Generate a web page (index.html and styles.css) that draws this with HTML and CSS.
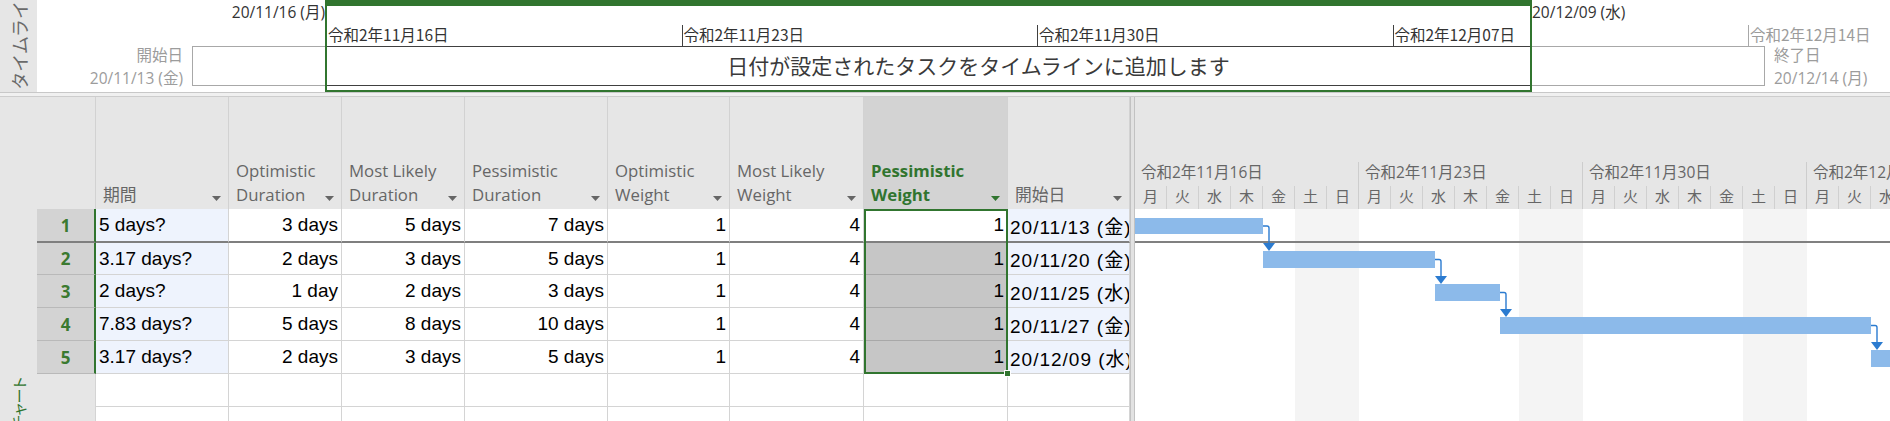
FILE: index.html
```html
<!DOCTYPE html>
<html lang="ja">
<head>
<meta charset="utf-8">
<title>Gantt</title>
<link rel="stylesheet" href="styles.css">
</head>
<body>
<div class="app">
  <div class="tl-pane">
    <div class="side side-top"><span class="side-text">タイムライン</span></div>
    <div class="timeline">
      <div class="tl-date tl-date-start">20/11/16 (月)</div>
      <div class="tl-date tl-date-end">20/12/09 (水)</div>
      <div class="tl-labels tl-labels-start"><span>開始日</span><span>20/11/13 (金)</span></div>
      <div class="tl-bar"><span class="tl-msg">日付が設定されたタスクをタイムラインに追加します</span></div>
      <div class="tl-labels tl-labels-end"><span>終了日</span><span>20/12/14 (月)</span></div>
      <div class="tl-scale">
        <div class="tick">令和2年11月16日</div>
        <div class="tick">令和2年11月23日</div>
        <div class="tick">令和2年11月30日</div>
        <div class="tick">令和2年12月07日</div>
        <div class="tick tick-out">令和2年12月14日</div>
      </div>
      <div class="tl-window"><div class="tl-window-band"></div></div>
    </div>
  </div>
  <div class="divider"></div>
  <div class="gantt-pane">
    <div class="side side-bottom"><span class="side-text side-active">ガントチャート</span></div>
    <div class="sheet">
      <div class="h h-rn"></div>
      <div class="h"><span class="h-text">期間</span><svg class="dd" viewBox="0 0 9 5"><path d="M0 0H9L4.5 5Z"/></svg></div>
      <div class="h"><span class="h-text">Optimistic<br>Duration</span><svg class="dd" viewBox="0 0 9 5"><path d="M0 0H9L4.5 5Z"/></svg></div>
      <div class="h"><span class="h-text">Most Likely<br>Duration</span><svg class="dd" viewBox="0 0 9 5"><path d="M0 0H9L4.5 5Z"/></svg></div>
      <div class="h"><span class="h-text">Pessimistic<br>Duration</span><svg class="dd" viewBox="0 0 9 5"><path d="M0 0H9L4.5 5Z"/></svg></div>
      <div class="h"><span class="h-text">Optimistic<br>Weight</span><svg class="dd" viewBox="0 0 9 5"><path d="M0 0H9L4.5 5Z"/></svg></div>
      <div class="h"><span class="h-text">Most Likely<br>Weight</span><svg class="dd" viewBox="0 0 9 5"><path d="M0 0H9L4.5 5Z"/></svg></div>
      <div class="h h-sel"><span class="h-text">Pessimistic<br>Weight</span><svg class="dd" viewBox="0 0 9 5"><path d="M0 0H9L4.5 5Z"/></svg></div>
      <div class="h"><span class="h-text">開始日</span><svg class="dd" viewBox="0 0 9 5"><path d="M0 0H9L4.5 5Z"/></svg></div>

      <div class="c rn r1">1</div>
      <div class="c blue l r1">5 days?</div>
      <div class="c r1">3 days</div>
      <div class="c r1">5 days</div>
      <div class="c r1">7 days</div>
      <div class="c r1">1</div>
      <div class="c r1">4</div>
      <div class="c r1">1</div>
      <div class="c blue l r1 date">20/11/13 (金)</div>

      <div class="c rn">2</div>
      <div class="c blue l">3.17 days?</div>
      <div class="c">2 days</div>
      <div class="c">3 days</div>
      <div class="c">5 days</div>
      <div class="c">1</div>
      <div class="c">4</div>
      <div class="c sel">1</div>
      <div class="c blue l date">20/11/20 (金)</div>

      <div class="c rn">3</div>
      <div class="c blue l">2 days?</div>
      <div class="c">1 day</div>
      <div class="c">2 days</div>
      <div class="c">3 days</div>
      <div class="c">1</div>
      <div class="c">4</div>
      <div class="c sel">1</div>
      <div class="c blue l date">20/11/25 (水)</div>

      <div class="c rn">4</div>
      <div class="c blue l">7.83 days?</div>
      <div class="c">5 days</div>
      <div class="c">8 days</div>
      <div class="c">10 days</div>
      <div class="c">1</div>
      <div class="c">4</div>
      <div class="c sel">1</div>
      <div class="c blue l date">20/11/27 (金)</div>

      <div class="c rn">5</div>
      <div class="c blue l">3.17 days?</div>
      <div class="c">2 days</div>
      <div class="c">3 days</div>
      <div class="c">5 days</div>
      <div class="c">1</div>
      <div class="c">4</div>
      <div class="c sel">1</div>
      <div class="c blue l date">20/12/09 (水)</div>

      <div class="c rn-empty"></div>
      <div class="c"></div><div class="c"></div><div class="c"></div><div class="c"></div>
      <div class="c"></div><div class="c"></div><div class="c"></div><div class="c"></div>

      <div class="c rn-empty"></div>
      <div class="c"></div><div class="c"></div><div class="c"></div><div class="c"></div>
      <div class="c"></div><div class="c"></div><div class="c"></div><div class="c"></div>

      <div class="selection"><span class="handle"></span></div>
    </div>
    <div class="splitter"></div>
    <div class="chart">
      <div class="chart-head">
        <div class="week">
          <div class="week-label">令和2年11月16日</div>
          <div class="days"><span>月</span><span>火</span><span>水</span><span>木</span><span>金</span><span>土</span><span>日</span></div>
        </div>
        <div class="week">
          <div class="week-label">令和2年11月23日</div>
          <div class="days"><span>月</span><span>火</span><span>水</span><span>木</span><span>金</span><span>土</span><span>日</span></div>
        </div>
        <div class="week">
          <div class="week-label">令和2年11月30日</div>
          <div class="days"><span>月</span><span>火</span><span>水</span><span>木</span><span>金</span><span>土</span><span>日</span></div>
        </div>
        <div class="week">
          <div class="week-label">令和2年12月07日</div>
          <div class="days"><span>月</span><span>火</span><span>水</span><span>木</span><span>金</span><span>土</span><span>日</span></div>
        </div>
      </div>
      <div class="chart-body">
        <div class="bg-week"><span></span><span></span><span></span><span></span><span></span><span class="we"></span><span class="we"></span></div>
        <div class="bg-week"><span></span><span></span><span></span><span></span><span></span><span class="we"></span><span class="we"></span></div>
        <div class="bg-week"><span></span><span></span><span></span><span></span><span></span><span class="we"></span><span class="we"></span></div>
        <div class="bg-week"><span></span><span></span><span></span><span></span><span></span><span class="we"></span><span class="we"></span></div>
        <svg class="bars" width="755" height="212" viewBox="0 0 755 212">
          <rect x="0" y="32" width="755" height="2" fill="#808080"/>
          <rect class="bar" x="0" y="9" width="128" height="16"/>
          <rect class="bar" x="128" y="42" width="172" height="17"/>
          <rect class="bar" x="300" y="75" width="65" height="17"/>
          <rect class="bar" x="365" y="108" width="371" height="17"/>
          <rect class="bar" x="736" y="141" width="30" height="17"/>
          <path class="link" d="M128 17H132Q134 17 134 19V35"/>
          <polygon class="arrow" points="128,34 140,34 134,42"/>
          <path class="link" d="M300 50.5H304Q306 50.5 306 52.5V68"/>
          <polygon class="arrow" points="300,67 312,67 306,75"/>
          <path class="link" d="M365 83.5H369Q371 83.5 371 85.5V101"/>
          <polygon class="arrow" points="365,100 377,100 371,108"/>
          <path class="link" d="M736 116.5H740Q742 116.5 742 118.5V134"/>
          <polygon class="arrow" points="736,133 748,133 742,141"/>
        </svg>
      </div>
    </div>
  </div>
</div>
</body>
</html>
```

FILE: styles.css
```css
* { box-sizing: border-box; }
html, body {
  margin: 0;
  padding: 0;
  width: 1890px;
  height: 421px;
  overflow: hidden;
  background: #ffffff;
}
body {
  font-family: "Open Sans", "Noto Sans CJK JP", sans-serif;
  color: #333;
}
.app {
  display: flex;
  flex-direction: column;
  width: 1890px;
  height: 421px;
}

/* ---------- side labels ---------- */
.side {
  width: 37px;
  flex-shrink: 0;
  background: #e6e6e6;
  display: flex;
  flex-direction: column;
  align-items: center;
  overflow: hidden;
}
.side-text {
  flex-shrink: 0;
  writing-mode: vertical-rl;
  text-orientation: sideways;
  transform: rotate(180deg);
  font-family: "Noto Sans CJK JP", sans-serif;
  font-size: 18px;
  line-height: 20px;
  color: #6a6a6a;
  white-space: nowrap;
}
.side-top {
  justify-content: flex-end;
  padding-bottom: 2px;
}
.side-bottom {
  justify-content: flex-start;
  padding-top: 280px;
}
.side-active {
  color: #31752f;
  font-size: 15px;
  font-feature-settings: "palt";
}

/* ---------- timeline ---------- */
.tl-pane {
  display: flex;
  height: 93px;
  flex-shrink: 0;
  border-bottom: 1px solid #c8c8c8;
}
.timeline {
  flex: 1;
  display: grid;
  grid-template-columns: 155px 133px 1207px 233px 1fr;
  grid-template-rows: 46px 40px 6px;
  overflow: hidden;
  font-size: 15.5px;
}
.tl-date {
  grid-row: 1;
  align-self: start;
  line-height: 24px;
  color: #333;
  white-space: nowrap;
}
.tl-date-start { grid-column: 1 / 3; justify-self: end; }
.tl-date-end { grid-column: 4 / 6; justify-self: start; }
.tl-labels {
  grid-row: 2 / 4;
  display: flex;
  flex-direction: column;
  justify-content: center;
  line-height: 23px;
  color: #9c9c9c;
  white-space: nowrap;
  margin-top: -4px;
}
.tl-labels-start { grid-column: 1; align-items: flex-end; padding-right: 9px; }
.tl-labels-end { grid-column: 5; align-items: flex-start; padding-left: 9px; }
.tl-bar {
  grid-column: 2 / 5;
  grid-row: 2;
  border: 1px solid #a8a8a8;
  display: flex;
  align-items: center;
  justify-content: center;
}
.tl-msg {
  font-family: "Noto Sans CJK JP", sans-serif;
  font-weight: 400;
  font-size: 21px;
  color: #3a3a3a;
  white-space: nowrap;
  margin-top: -3px;
}
.tl-scale {
  grid-column: 3 / 6;
  grid-row: 1;
  align-self: end;
  display: flex;
  padding-left: 1px;
}
.tick {
  flex: 0 0 355.5px;
  height: 21px;
  border-left: 1px solid #404040;
  padding-left: 1px;
  font-family: "Noto Sans CJK JP", sans-serif;
  font-size: 15.5px;
  line-height: 18px;
  color: #333;
  white-space: nowrap;
}
.tick-out { color: #9c9c9c; border-left-color: #a8a8a8; }
.tl-window {
  grid-column: 3;
  grid-row: 1 / 4;
  border: 2px solid #31752f;
  border-top-width: 6px;
}
.tl-window-band {
  margin-top: 40px;
  height: 40px;
  border-top: 1px solid #404040;
  border-bottom: 1px solid #404040;
}

.divider {
  height: 4px;
  flex-shrink: 0;
  background: #f0f0f0;
  border-bottom: 1px solid #cdcdcd;
}

/* ---------- gantt pane ---------- */
.gantt-pane {
  flex: 1;
  display: flex;
  overflow: hidden;
}
.sheet {
  flex: 0 0 1093px;
  position: relative;
  display: grid;
  grid-template-columns: 59px 133px 113px 123px 143px 122px 134px 144px 122px;
  grid-template-rows: 112px 34px 32px 33px 33px 33px 33px 33px;
  align-content: start;
  overflow: hidden;
}
.h {
  background: #e6e6e6;
  border-right: 1px solid #d2d2d2;
  display: flex;
  align-items: flex-end;
  justify-content: space-between;
  padding: 0 7px 2px 7px;
  font-size: 16.8px;
  line-height: 24px;
  color: #666;
  white-space: nowrap;
}
.h-rn { border-right: 1px solid #d2d2d2; }
.h-sel {
  background: #d3d3d3;
  color: #31752f;
  font-weight: 700;
}
.dd {
  width: 9px;
  height: 5px;
  margin-bottom: 6px;
  flex-shrink: 0;
  fill: #666;
}
.h-sel .dd { fill: #31752f; }

.c {
  display: flex;
  align-items: center;
  justify-content: flex-end;
  padding: 0 3px;
  border-right: 1px solid #d4d4d4;
  border-bottom: 1px solid #d4d4d4;
  font-family: "Liberation Sans", "Noto Sans CJK JP", sans-serif;
  font-size: 19px;
  color: #000;
  white-space: nowrap;
  overflow: hidden;
  background: #fff;
}
.c.l { justify-content: flex-start; }
.c.blue { background: #eef3fd; }
.c.date { padding-left: 2px; letter-spacing: 1px; }
.c.rn {
  justify-content: center;
  background: #d3d3d3;
  border-bottom: 1px solid #b9b9b9;
  border-right: 2px solid #31752f;
  font-family: "Open Sans", sans-serif;
  font-weight: 700;
  font-size: 17px;
  letter-spacing: 0;
  color: #3b7a30;
}
.c.rn-empty {
  background: #e6e6e6;
  border-bottom: none;
  border-right: 1px solid #d4d4d4;
}
.c.sel {
  background: #c6c6c6;
  border-bottom-color: #a8a8a8;
}
.c.r1 { border-bottom: 2px solid #7f7f7f; }

/* selection frame drawn over the Pessimistic Weight column */
.selection {
  position: absolute;
  left: 827px;
  top: 112px;
  width: 144px;
  height: 165px;
  border: 2px solid #31752f;
  z-index: 2;
  pointer-events: none;
}
.handle {
  position: absolute;
  right: -5px;
  bottom: -5px;
  width: 7px;
  height: 7px;
  background: #31752f;
  border: 1px solid #fff;
}

.splitter {
  flex: 0 0 5px;
  background: #e2e2e2;
  border-left: 1px solid #c2c2c2;
  border-right: 1px solid #c2c2c2;
}

.chart {
  flex: 0 0 755px;
  display: flex;
  flex-direction: column;
  overflow: hidden;
}
.chart-head {
  height: 112px;
  flex-shrink: 0;
  background: #e6e6e6;
  display: flex;
  align-items: flex-end;
}
.week {
  flex: 0 0 224px;
  height: 47px;
  border-right: 1px solid #cdcdcd;
  display: flex;
  flex-direction: column;
}
.week-label {
  height: 24px;
  padding-left: 6px;
  font-size: 15.5px;
  line-height: 20px;
  color: #666;
  white-space: nowrap;
}
.days {
  flex: 1;
  display: flex;
}
.days span {
  flex: 0 0 32px;
  border-right: 1px solid #d0d0d0;
  text-align: center;
  font-family: "Noto Sans CJK JP", sans-serif;
  font-size: 15px;
  line-height: 19px;
  color: #666;
}
.days span:last-child { flex-basis: 31px; border-right: none; }

.chart-body {
  flex: 1;
  position: relative;
  display: flex;
  background: #fff;
}
.bg-week {
  flex: 0 0 224px;
  display: flex;
}
.bg-week span { flex: 0 0 32px; }
.bg-week span.we { background: #f4f4f4; }
.bars {
  position: absolute;
  left: 0;
  top: 0;
}
.bar { fill: #8cbaea; }
.link { fill: none; stroke: #2b7bd0; stroke-width: 1.4; }
.arrow { fill: #2b7bd0; }
```
